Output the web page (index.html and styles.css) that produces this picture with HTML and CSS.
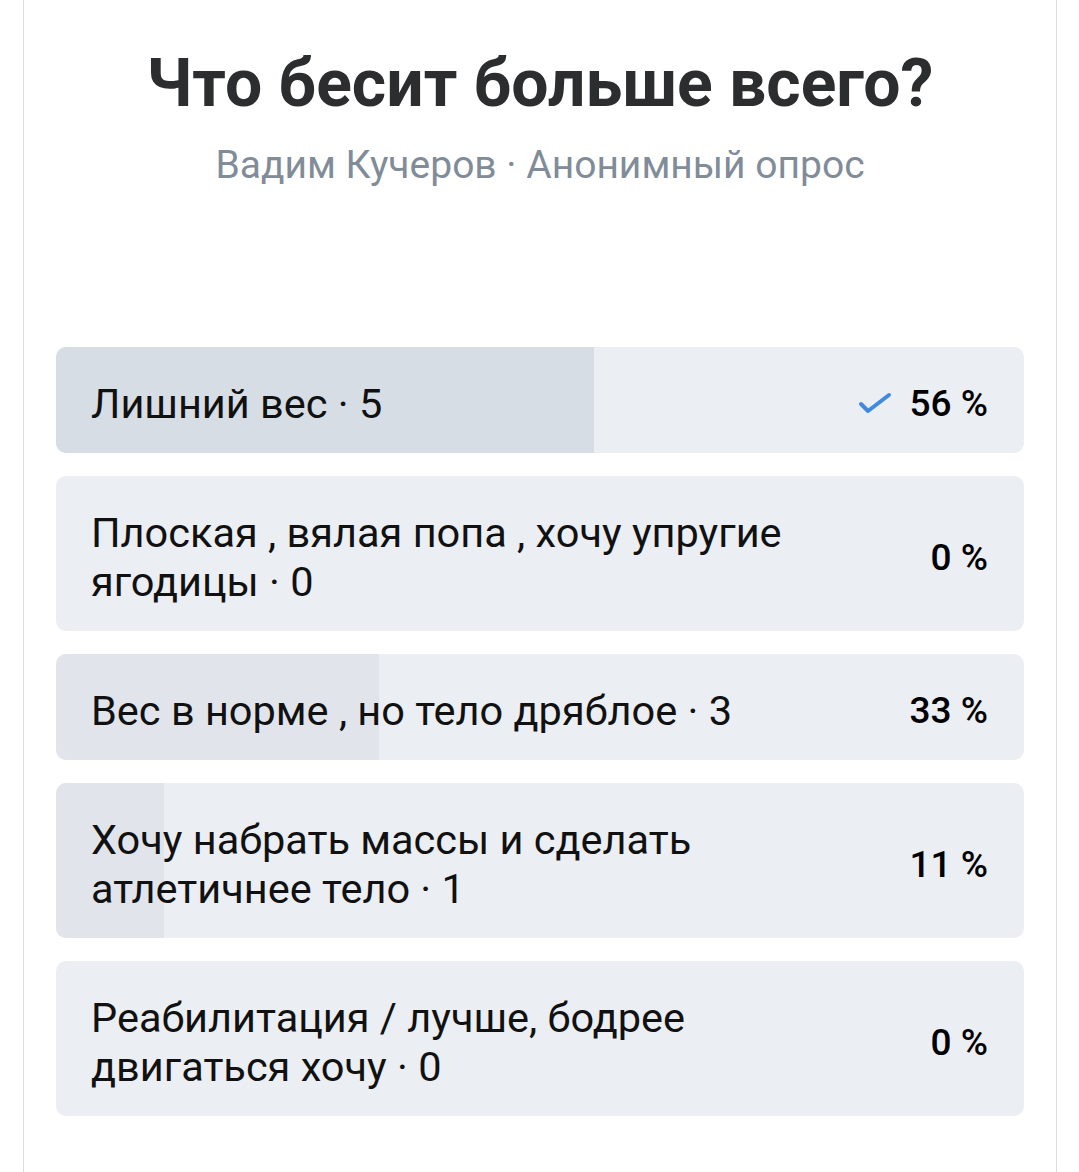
FILE: index.html
```html
<!DOCTYPE html>
<html>
    <head>
        <meta charset="utf-8">
        <link rel="stylesheet" href="styles.css">
    </head>
    <body>
        <div class="card">
            <h1 class="poll-title">Что бесит больше всего?</h1>
            <div class="poll-meta">Вадим Кучеров · Анонимный опрос</div>

            <div class="options">
                <div class="option option-voted">
                    <div class="option-fill" style="width: 55.56%"></div>
                    <div class="option-text">Лишний вес · 5</div>
                    <div class="option-pct">
                        <svg class="check" width="34" height="24" viewBox="0 0 34 24">
                            <path d="M3 12 L10 19 L31 3" fill="none" stroke="#3f8ae0" stroke-width="4" stroke-linecap="round" stroke-linejoin="round"/>
                        </svg>
                        <span>56 %</span>
                    </div>
                </div>

                <div class="option">
                    <div class="option-fill" style="width: 0%"></div>
                    <div class="option-text">Плоская , вялая попа , хочу упругие ягодицы · 0</div>
                    <div class="option-pct"><span>0 %</span></div>
                </div>

                <div class="option">
                    <div class="option-fill" style="width: 33.33%"></div>
                    <div class="option-text">Вес в норме , но тело дряблое · 3</div>
                    <div class="option-pct"><span>33 %</span></div>
                </div>

                <div class="option">
                    <div class="option-fill" style="width: 11.11%"></div>
                    <div class="option-text">Хочу набрать массы и сделать атлетичнее тело · 1</div>
                    <div class="option-pct"><span>11 %</span></div>
                </div>

                <div class="option">
                    <div class="option-fill" style="width: 0%"></div>
                    <div class="option-text">Реабилитация / лучше, бодрее двигаться хочу · 0</div>
                    <div class="option-pct"><span>0 %</span></div>
                </div>
            </div>
        </div>
    </body>
</html>
```

FILE: styles.css
```css
*{
    margin: 0;
    padding: 0;
    box-sizing: border-box;
}
body{
    background: #fff;
    font-family: Roboto, 'Noto Sans', sans-serif;
    color: #000;
}
.card{
    margin: 0 22px 0 23px;
    min-height: 100vh;
    border-left: 1px solid #dcdde0;
    border-right: 1px solid #dcdde0;
    padding: 44px 32px 40px 32px;
}
.poll-title{
    font-size: 66px;
    font-weight: 700;
    line-height: 80px;
    color: #2c2d2e;
    text-align: center;
}
.poll-meta{
    margin-top: 18px;
    font-size: 39px;
    line-height: 46px;
    color: #818c99;
    text-align: center;
}
.options{
    margin-top: 159px;
    display: flex;
    flex-direction: column;
    gap: 23px;
}
.option{
    position: relative;
    display: flex;
    align-items: center;
    background: #ebeef3;
    border-radius: 10px;
    overflow: hidden;
    padding: 32px 36px 25px 35px;
}
.option-fill{
    position: absolute;
    left: 0;
    top: 0;
    bottom: 0;
    background: #e1e5eb;
}
.option-voted .option-fill{
    background: #d6dde5;
}
.option-text{
    position: relative;
    flex: 1;
    font-size: 41.5px;
    line-height: 49px;
    color: #111;
}
.option-pct{
    position: relative;
    width: 150px;
    margin-left: 20px;
    display: flex;
    align-items: center;
    justify-content: flex-end;
    gap: 18px;
    font-size: 37px;
    font-weight: 500;
    line-height: 49px;
    color: #000;
}
.check{
    display: block;
}
```
